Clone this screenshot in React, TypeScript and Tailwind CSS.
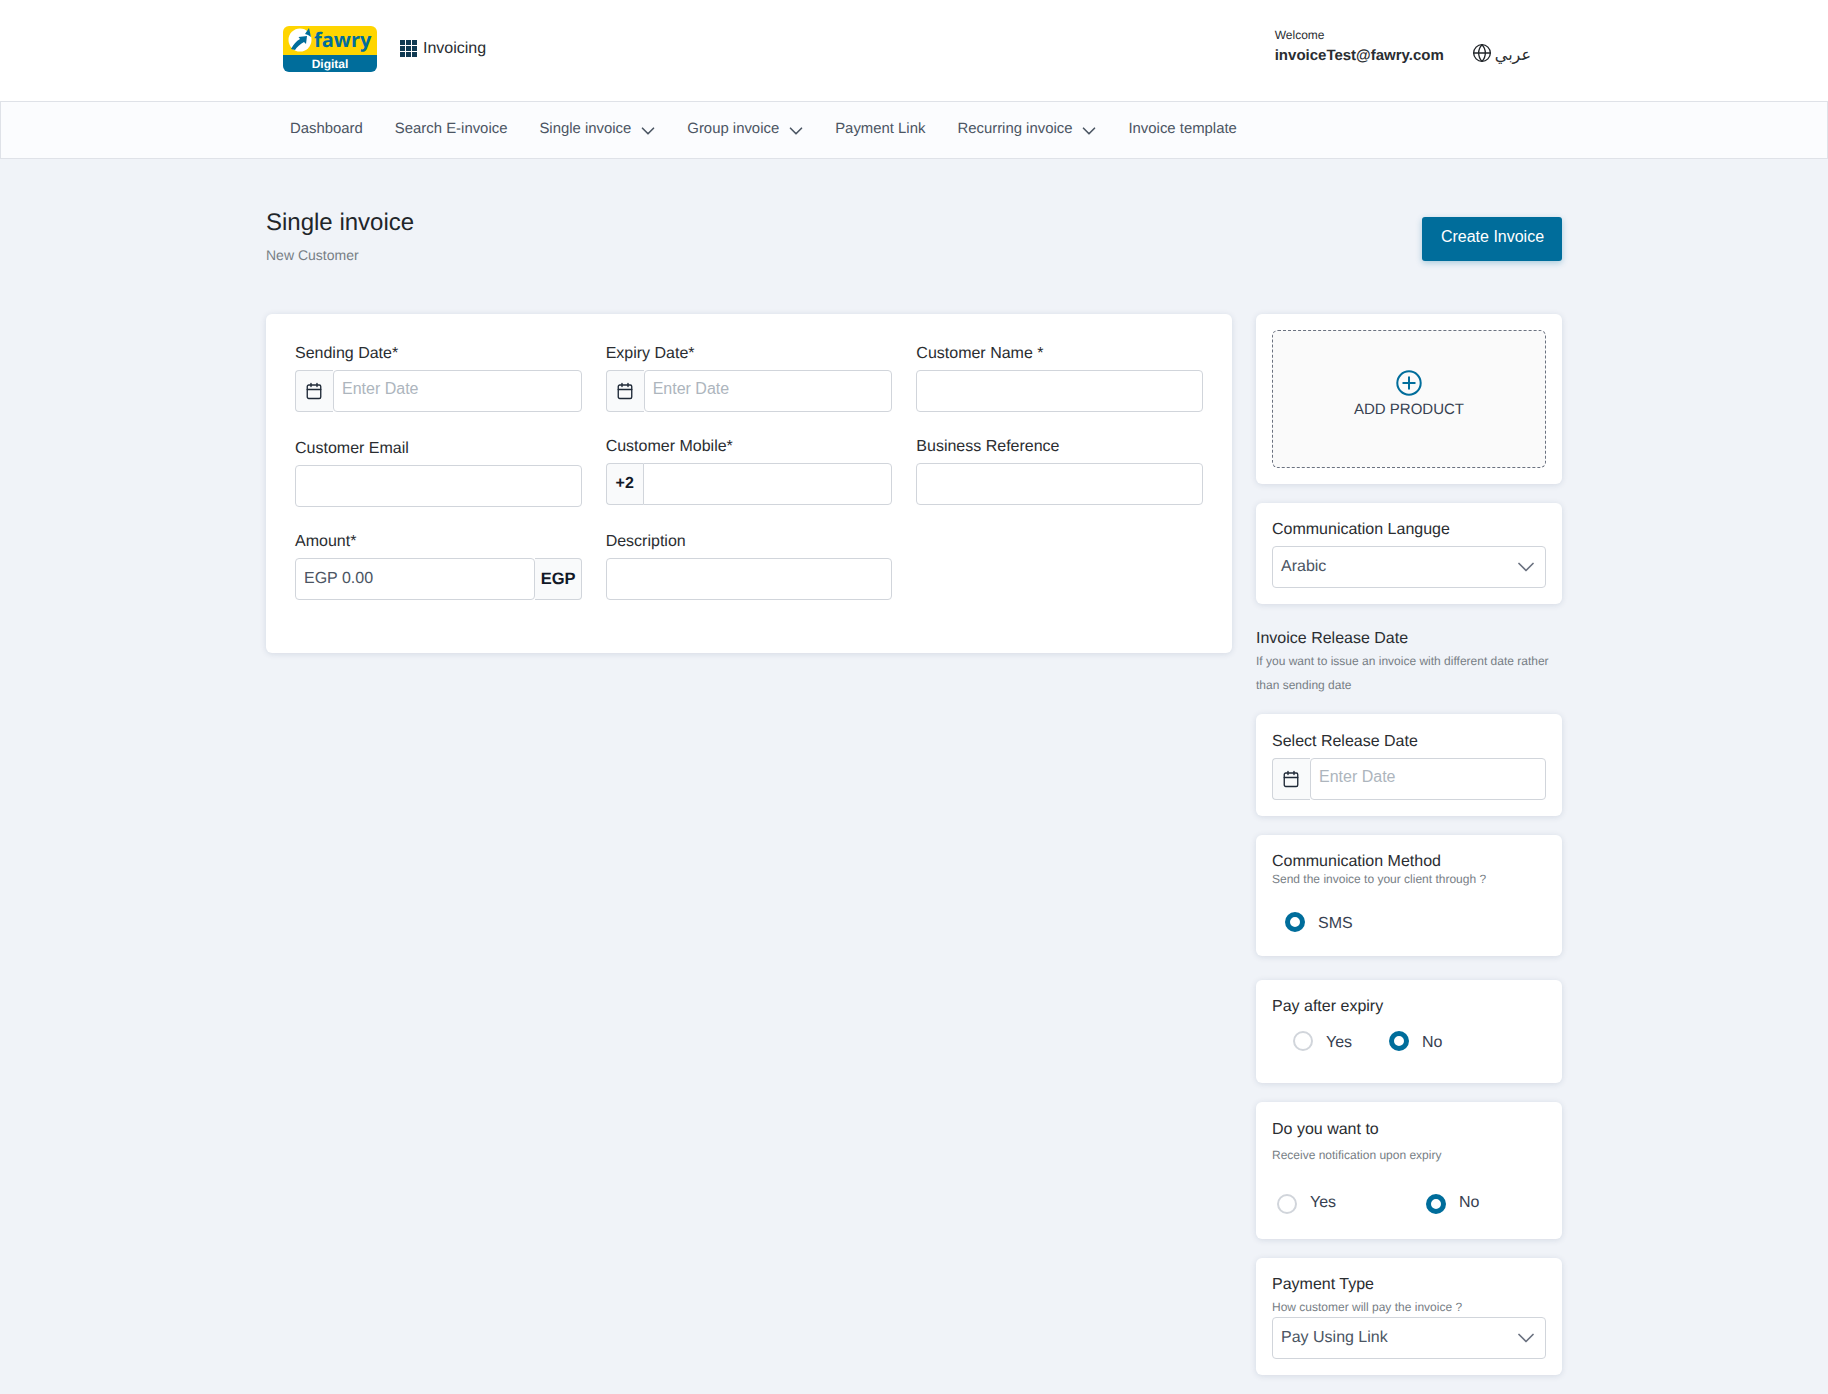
import { Calendar, ChevronDown, Globe } from "lucide-react";

const navItems = [
  { label: "Dashboard" },
  { label: "Search E-invoice" },
  { label: "Single invoice", menu: true },
  { label: "Group invoice", menu: true },
  { label: "Payment Link" },
  { label: "Recurring invoice", menu: true },
  { label: "Invoice template" },
];

function Logo() {
  return (
    <div className="w-[94px] h-[46px] rounded-[6px] overflow-hidden flex flex-col">
      <div className="h-[29px] bg-[#ffd500] flex items-center pl-[5px]">
        <svg width="24" height="24" viewBox="0 0 24 24" className="shrink-0">
          <circle cx="12" cy="12" r="11.5" fill="#fff" />
          <path d="M3 21 C6 16 8 13 12 11 L10.5 9 L19 8 L18 16 L16 14 C12 16 9 19 7 22 Z" fill="#006d9b" />
          <path d="M17 6 L21 0 L23 9 L20 7 Z" fill="#006d9b" />
        </svg>
        <span className="ml-[2px] text-[#006d9b] text-[20px] font-bold leading-none font-['Open_Sans',sans-serif]">fawry</span>
      </div>
      <div className="flex-1 pt-[1px] bg-[#006d9b] flex items-center justify-center text-white text-xs font-bold leading-none">Digital</div>
    </div>
  );
}

function Label({ children, className = "" }: { children: React.ReactNode; className?: string }) {
  return <label className={`block h-6 text-base leading-[27px] text-[#2a2d31] ${className}`}>{children}</label>;
}

function Addon({ children, className = "" }: { children: React.ReactNode; className?: string }) {
  return (
    <span className={`h-[42px] shrink-0 flex items-center justify-center bg-[#f9fafb] border border-[#d1d5db] rounded-[4px] text-[#111827] font-bold ${className}`}>
      {children}
    </span>
  );
}

function DateInput() {
  return (
    <div className="flex">
      <Addon className="w-[38px] pr-[1px] rounded-r-none border-r-0">
        <Calendar size={18} strokeWidth={1.8} className="text-[#1f2937]" />
      </Addon>
      <input placeholder="Enter Date" className="min-w-0 flex-1 h-[42px] px-[8px] pb-[4px] border border-[#d1d5db] rounded-[4px] bg-white text-base outline-none placeholder:text-[#adb5bd]" />
    </div>
  );
}

function TextInput() {
  return <input className="block w-full h-[42px] px-2 border border-[#d1d5db] rounded-[4px] bg-white outline-none" />;
}

function SelectBox({ value }: { value: string }) {
  return (
    <div className="h-[42px] flex items-center justify-between pl-2 pr-[5px] border border-[#d1d5db] rounded-[4px] bg-white">
      <span className="text-base text-[#4b5563]">{value}</span>
      <ChevronDown size={28} strokeWidth={1.5} className="text-[#6b7280]" />
    </div>
  );
}

function Radio({ checked, label, className = "", labelClass = "" }: { checked?: boolean; label: string; className?: string; labelClass?: string }) {
  return (
    <span className={`flex items-center ${className}`}>
      <span className={`w-5 h-5 rounded-full bg-white shrink-0 ${checked ? "border-[5px] border-[#006d9b]" : "border-2 border-[#d1d5db]"}`} />
      <span className={`ml-[13px] h-6 text-base leading-[27px] text-[#374151] ${labelClass}`}>{label}</span>
    </span>
  );
}

function Card({ children, className = "" }: { children: React.ReactNode; className?: string }) {
  return <div className={`bg-white rounded-[6px] shadow-[0_1px_6px_rgba(15,40,80,0.12)] ${className}`}>{children}</div>;
}

export default function App() {
  return (
    <div className="min-h-[1394px] bg-[#f0f3f8] font-['Liberation_Sans',Arial,sans-serif] text-[#2a2d31] [text-rendering:geometricPrecision]">
      <header className="h-[102px] bg-white border-b border-[#dfe2e8] flex justify-center">
        <div className="w-[1296px] flex items-center justify-between pl-[17px] pr-[31px]">
          <div className="flex items-center pb-[4px]">
            <Logo />
            <svg width="17" height="17" viewBox="0 0 17 17" className="ml-[23px] text-[#0f3a52]" fill="currentColor">
              <rect x="0" y="0" width="5" height="5" />
              <rect x="6" y="0" width="5" height="5" />
              <rect x="12" y="0" width="5" height="5" />
              <rect x="0" y="6" width="5" height="5" />
              <rect x="6" y="6" width="5" height="5" />
              <rect x="12" y="6" width="5" height="5" />
              <rect x="0" y="12" width="5" height="5" />
              <rect x="6" y="12" width="5" height="5" />
              <rect x="12" y="12" width="5" height="5" />
            </svg>
            <span className="ml-[6px] text-base">Invoicing</span>
          </div>
          <div className="flex items-center">
            <div className="mr-[28px] mb-[9px]">
              <div className="text-xs leading-[18px]">Welcome</div>
              <div className="mt-[1px] text-[15px] leading-[22px] font-bold">invoiceTest@fawry.com</div>
            </div>
            <div className="flex items-center mt-[7px]">
              <Globe size={20} strokeWidth={1.6} className="text-[#212529] mb-[3px]" />
              <span className="ml-[3px] mt-[2px] text-base font-['DejaVu_Sans',sans-serif]">عربي</span>
            </div>
          </div>
        </div>
      </header>

      <nav className="h-[57px] bg-[#fbfcfe] border border-t-0 border-[#dfe2e8] flex justify-center">
        <div className="w-[1296px] flex items-center pl-[24px] pb-[2px] gap-x-[32px] text-[14.9px] text-[#4b5563]">
          {navItems.map((item) => (
            <span key={item.label} className="flex items-center">
              {item.label}
              {item.menu && <ChevronDown size={22} strokeWidth={1.8} className="ml-[6px] mt-[3px] -mr-[4px] text-[#4b5563]" />}
            </span>
          ))}
        </div>
      </nav>

      <main className="w-[1296px] mx-auto">
        <div className="flex justify-between pt-[48px] h-[155px]">
          <div>
            <h1 className="h-[30px] text-2xl leading-[32px] text-[#212529]">Single invoice</h1>
            <p className="mt-[8px] text-sm leading-5 text-[#777e85]">New Customer</p>
          </div>
          <button className="mt-[10px] w-[140px] h-[44px] pb-[4px] pl-[1px] bg-[#006d9b] text-white text-base rounded-[3px] shadow-[0_2px_6px_rgba(0,109,155,0.3)]">
            Create Invoice
          </button>
        </div>

        <div className="flex items-start justify-between">
          <Card className="w-[966px] h-[339px] px-[29px] pt-[26px]">
            <div className="grid grid-cols-3 gap-x-[24px]">
              <div>
                <Label className="mb-[6px]">Sending Date*</Label>
                <DateInput />
              </div>
              <div>
                <Label className="mb-[6px]">Expiry Date*</Label>
                <DateInput />
              </div>
              <div>
                <Label className="mb-[6px]">Customer Name *</Label>
                <TextInput />
              </div>

              <div className="mt-[23px]">
                <Label className="mb-[6px]">Customer Email</Label>
                <TextInput />
              </div>
              <div className="mt-[21px]">
                <Label className="mb-[6px]">Customer Mobile*</Label>
                <div className="flex">
                  <Addon className="w-[37px] rounded-r-none border-r-0 text-base">+2</Addon>
                  <input className="min-w-0 flex-1 h-[42px] border border-[#d1d5db] rounded-r-[4px] outline-none" />
                </div>
              </div>
              <div className="mt-[21px]">
                <Label className="mb-[6px]">Business Reference</Label>
                <TextInput />
              </div>

              <div className="mt-[21px]">
                <Label className="mb-[6px]">Amount*</Label>
                <div className="flex">
                  <div className="flex-1 h-[42px] flex items-center px-2 pb-[1px] border border-[#d1d5db] rounded-[4px] text-base text-[#4b5563]">EGP 0.00</div>
                  <Addon className="w-[47px] pl-[1px] rounded-l-none border-l-0 text-[16.5px]">EGP</Addon>
                </div>
              </div>
              <div className="mt-[21px]">
                <Label className="mb-[6px]">Description</Label>
                <TextInput />
              </div>
            </div>
          </Card>

          <div className="w-[306px] pb-[19px]">
            <Card className="h-[170px] p-[16px]">
              <div className="h-[138px] flex flex-col items-center pt-[39px] bg-[#fafafa] border border-dashed border-[#6b7280] rounded-[6px]">
                <svg width="26" height="26" viewBox="0 0 26 26" fill="none" stroke="#006d9b" strokeWidth="2">
                  <circle cx="13" cy="13" r="11.7" />
                  <path d="M13 6.5v13M6.5 13h13" />
                </svg>
                <span className="mt-[4px] text-[15px] leading-[20px] text-[#374151]">ADD PRODUCT</span>
              </div>
            </Card>

            <Card className="mt-[19px] h-[101px] px-[16px] pt-[13px]">
              <Label className="mb-[6px]">Communication Languge</Label>
              <SelectBox value="Arabic" />
            </Card>

            <Label className="mt-[21px]">Invoice Release Date</Label>
            <p className="text-xs leading-6 text-[#777e85]">If you want to issue an invoice with different date rather than sending date</p>

            <Card className="mt-[17px] h-[102px] px-[16px] pt-[14px]">
              <Label className="mb-[6px]">Select Release Date</Label>
              <DateInput />
            </Card>

            <Card className="mt-[19px] h-[121px] px-[16px] pt-[15px]">
              <div className="h-5 text-base leading-[23px]">Communication Method</div>
              <div className="text-xs leading-[18px] text-[#777e85]">Send the invoice to your client through ?</div>
              <Radio checked label="SMS" className="mt-[22px] ml-[13px]" />
            </Card>

            <Card className="mt-[24px] h-[103px] px-[16px] pt-[13px]">
              <Label>Pay after expiry</Label>
              <div className="mt-[12px] flex">
                <Radio label="Yes" className="ml-[21px] w-[96px]" />
                <Radio checked label="No" />
              </div>
            </Card>

            <Card className="mt-[19px] h-[137px] px-[16px] pt-[14px]">
              <Label>Do you want to</Label>
              <div className="mt-[3px] text-xs leading-6 text-[#777e85]">Receive notification upon expiry</div>
              <div className="mt-[22px] flex">
                <Radio label="Yes" className="ml-[5px] w-[149px]" labelClass="mb-[5px]" />
                <Radio checked label="No" labelClass="mb-[5px]" />
              </div>
            </Card>

            <Card className="mt-[19px] h-[117px] px-[16px] pt-[13px]">
              <Label>Payment Type</Label>
              <div className="mt-[3px] mb-[1px] text-xs leading-[18px] text-[#777e85]">How customer will pay the invoice ?</div>
              <SelectBox value="Pay Using Link" />
            </Card>
          </div>
        </div>
      </main>
    </div>
  );
}
